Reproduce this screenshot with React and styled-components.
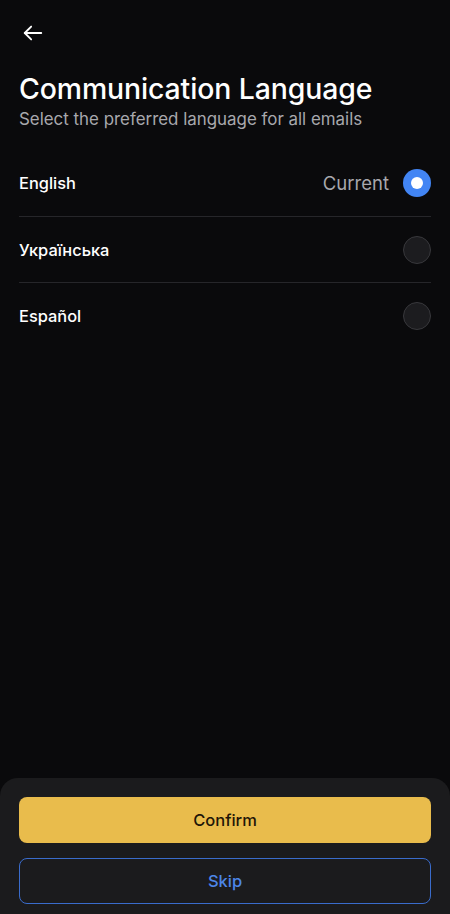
import React, { useState } from "react";
import styled, { createGlobalStyle } from "styled-components";

const GlobalStyle = createGlobalStyle`
  * { box-sizing: border-box; }
  body {
    margin: 0;
    background: #0a0a0c;
    font-family: Inter, "Noto Sans", sans-serif;
    -webkit-font-smoothing: antialiased;
  }
`;

const Page = styled.div`
  min-height: 914px;
  display: flex;
  flex-direction: column;
  background: #0a0a0c;
  color: #ffffff;
`;

const Content = styled.div`
  padding: 0 19px;
  display: flex;
  flex-direction: column;
`;

const BackButton = styled.button`
  width: 28px;
  height: 28px;
  margin-top: 19px;
  margin-left: 0;
  padding: 0;
  border: none;
  background: none;
  color: #ffffff;
  display: flex;
  align-items: center;
  justify-content: center;
`;

const Title = styled.h1`
  margin: 25px 0 0;
  font-size: 28.4px;
  font-weight: 500;
  line-height: 34px;
  letter-spacing: -0.1px;
`;

const Subtitle = styled.p`
  margin: 2px 0 0;
  font-size: 16.9px;
  line-height: 22px;
  color: #a8a8ad;
`;

const List = styled.div`
  margin-top: 20px;
  display: flex;
  flex-direction: column;
`;

const Row = styled.label`
  height: 66px;
  display: flex;
  align-items: center;
  gap: 14px;
  border-top: ${(p) => (p.$first ? "none" : "1px solid #26262a")};
  cursor: pointer;
`;

const LangName = styled.span`
  flex: 1;
  font-size: 16.4px;
  font-weight: 500;
  color: #ffffff;
`;

const CurrentTag = styled.span`
  font-size: 18.5px;
  color: #a8a8ad;
`;

const Radio = styled.span`
  width: 28px;
  height: 28px;
  border-radius: 50%;
  flex-shrink: 0;
  display: flex;
  align-items: center;
  justify-content: center;
  background: ${(p) => (p.$checked ? "#4285f4" : "#1c1c1f")};
  border: ${(p) => (p.$checked ? "none" : "1.5px solid #38383c")};

  &::after {
    content: "";
    display: ${(p) => (p.$checked ? "block" : "none")};
    width: 12px;
    height: 12px;
    border-radius: 50%;
    background: #ffffff;
  }
`;

const Sheet = styled.div`
  margin-top: auto;
  background: #1b1b1d;
  border-radius: 18px 18px 0 0;
  padding: 19px 19px 10px;
  display: flex;
  flex-direction: column;
  gap: 15px;
`;

const Button = styled.button`
  height: 46px;
  width: 100%;
  border-radius: 8px;
  font-family: Inter, "Noto Sans", sans-serif;
  font-size: 16.5px;
  font-weight: ${(p) => (p.$primary ? 500 : 500)};
  cursor: pointer;
  background: ${(p) => (p.$primary ? "#e9bc4c" : "transparent")};
  color: ${(p) => (p.$primary ? "#1f1608" : "#4d86e8")};
  border: ${(p) => (p.$primary ? "none" : "1.5px solid #3a6ccc")};
`;

const languages = [
  { id: "en", name: "English" },
  { id: "uk", name: "Українська" },
  { id: "es", name: "Español" },
];

const App = () => {
  const [selected, setSelected] = useState("en");
  const current = "en";

  return (
    <Page>
      <GlobalStyle />
      <Content>
        <BackButton aria-label="Back">
          <svg width="22" height="22" viewBox="0 0 24 24" fill="none" stroke="currentColor" strokeWidth="2" strokeLinecap="round" strokeLinejoin="round">
            <path d="M21 12H3" />
            <path d="M10 5l-7 7 7 7" />
          </svg>
        </BackButton>
        <Title>Communication Language</Title>
        <Subtitle>Select the preferred language for all emails</Subtitle>
        <List>
          {languages.map((lang, i) => (
            <Row key={lang.id} $first={i === 0} onClick={() => setSelected(lang.id)}>
              <LangName>{lang.name}</LangName>
              {lang.id === current && <CurrentTag>Current</CurrentTag>}
              <Radio $checked={selected === lang.id} />
            </Row>
          ))}
        </List>
      </Content>
      <Sheet>
        <Button $primary>Confirm</Button>
        <Button>Skip</Button>
      </Sheet>
    </Page>
  );
};

export default App;
